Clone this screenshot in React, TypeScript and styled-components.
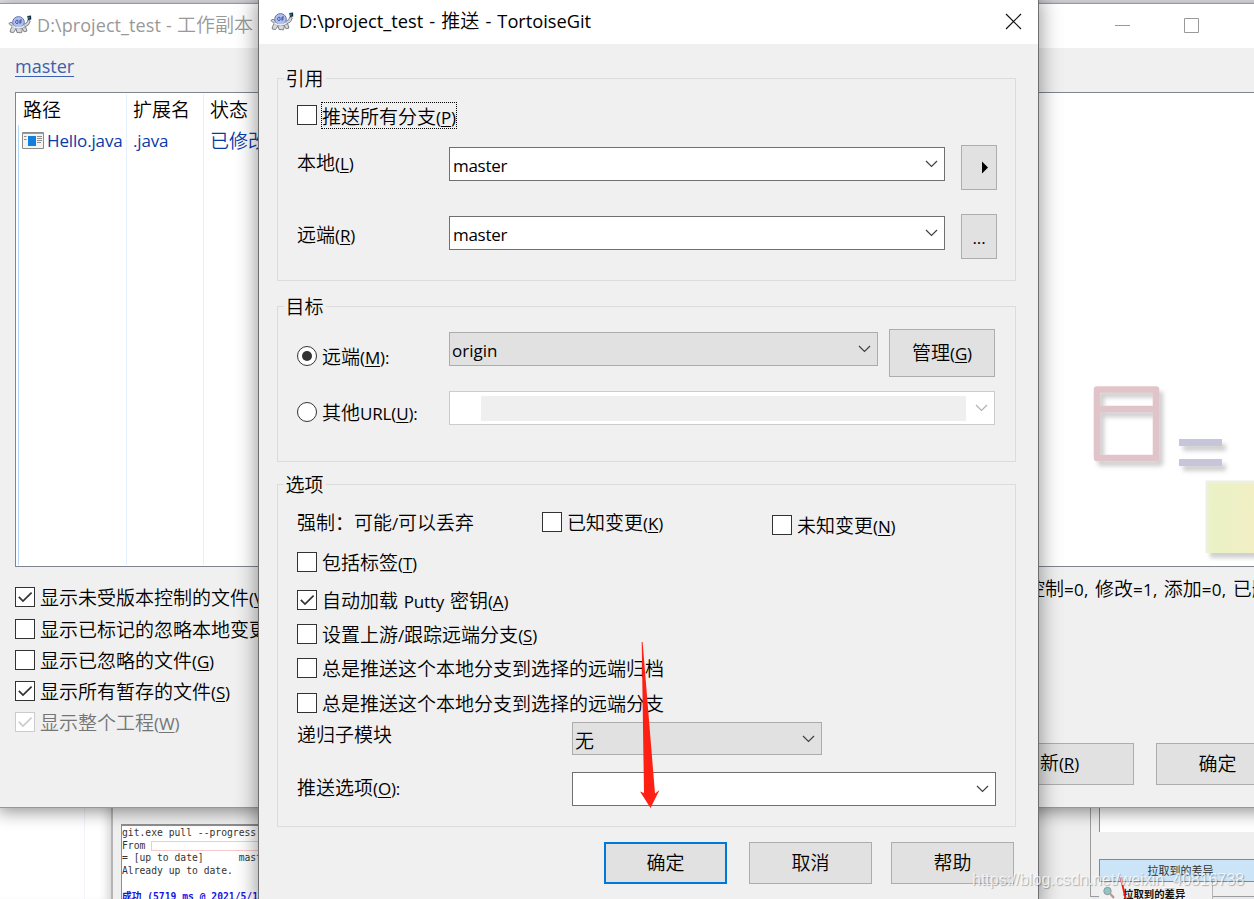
import React from "react";
import styled, { createGlobalStyle, css } from "styled-components";

const Global = createGlobalStyle`
  * { box-sizing: border-box; }
  html, body { margin: 0; padding: 0; }
  body {
    width: 1254px; height: 899px; overflow: hidden;
    font-family: "Noto Sans CJK SC", "Open Sans", sans-serif;
    font-weight: 350;
    font-size: 19px; line-height: 28px; color: #000;
  }
`;

const Desktop = styled.div`
  position: relative;
  width: 1254px;
  height: 899px;
  overflow: hidden;
  background: #e7e8ec;
`;

/* ---------- text ---------- */

const Line = styled.span<{ $color?: string }>`
  display: inline-block;
  white-space: pre;
  color: ${(p) => p.$color ?? "inherit"};
`;
const Latin = styled.span`
  font-family: "Open Sans", sans-serif;
  font-weight: 400;
  font-size: 17px;
  letter-spacing: -0.15px;
  word-spacing: 1.4px;
`;
const Key = styled.span`
  text-decoration: underline;
  text-decoration-thickness: 1px;
  text-underline-offset: 2px;
`;

/* "&X" marks X as the keyboard mnemonic */
function Text({ children, color }: { children: string; color?: string }) {
  const runs = children.match(/[\x20-\x7e]+|[^\x20-\x7e]+/g) ?? [];
  return (
    <Line $color={color}>
      {runs.map((run, i) => {
        if (!/[\x20-\x7e]/.test(run)) return <span key={i}>{run}</span>;
        const at = run.indexOf("&");
        if (at < 0) return <Latin key={i}>{run}</Latin>;
        return (
          <Latin key={i}>
            {run.slice(0, at)}
            <Key>{run[at + 1]}</Key>
            {run.slice(at + 2)}
          </Latin>
        );
      })}
    </Line>
  );
}

/* ---------- controls ---------- */

const Check = styled.span<{ $off?: boolean }>`
  flex: none;
  display: block;
  width: 20px;
  height: 20px;
  border: 1px solid ${(p) => (p.$off ? "#ccc" : "#333")};
  background: #fff;
  color: ${(p) => (p.$off ? "#ccc" : "#333")};
  svg { display: block; }
`;
const Option = styled.div<{ $mt?: number }>`
  display: flex;
  align-items: flex-start;
  height: 20px;
  margin-top: ${(p) => p.$mt ?? 0}px;
  gap: 5px;
  ${Line} { margin-top: -4px; }
`;
const Radio = styled.span<{ $on?: boolean }>`
  flex: none;
  display: flex;
  align-items: center;
  justify-content: center;
  width: 20px;
  height: 20px;
  border: 1px solid #333;
  border-radius: 50%;
  background: #fff;
  &::after {
    content: "";
    width: 10px;
    height: 10px;
    border-radius: 50%;
    background: ${(p) => (p.$on ? "#333" : "transparent")};
  }
`;
const Focus = styled.span`
  height: 27px;
  margin: -3px 0 0 -1px;
  padding: 0 1px;
  outline: 1px dotted #000;
  outline-offset: -1px;
  ${Line} { margin-top: -1px; }
`;

function CheckBox({ on, off }: { on?: boolean; off?: boolean }) {
  return (
    <Check $off={off}>
      {on && (
        <svg width="18" height="18" viewBox="0 0 18 18" fill="none" stroke="currentColor" strokeWidth="1.7">
          <path d="M2.8 8.8 7 13 15.6 4.6" />
        </svg>
      )}
    </Check>
  );
}

const Combo = styled.div<{ $w: number; $h?: number; $mt?: number; $kind?: "list" | "off" }>`
  flex: none;
  display: flex;
  align-items: center;
  justify-content: space-between;
  width: ${(p) => p.$w}px;
  height: ${(p) => p.$h ?? 34}px;
  margin-top: ${(p) => p.$mt ?? 0}px;
  padding: 2px 6px 0 3px;
  border: 1px solid #707070;
  background: #fff;
  ${Latin} { letter-spacing: -0.3px; }
  ${(p) => p.$kind === "list" && css`border-color: #acacac; background: #e1e1e1; padding-left: 2px; ${Latin} { letter-spacing: 0; }`}
  ${(p) => p.$kind === "off" && css`border-color: #ccc; padding-left: 31px;`}
  > svg { margin-top: -2px; margin-left: auto; }
`;
const Redacted = styled.div`
  width: 485px;
  height: 25px;
  margin-top: -2px;
  background: #efefef;
`;
const Chevron = ({ color = "#404040" }: { color?: string }) => (
  <svg width="13" height="8" viewBox="0 0 13 8" fill="none" stroke={color} strokeWidth="1.2">
    <path d="M1 1 6.5 6.5 12 1" />
  </svg>
);
const Button = styled.div<{ $w: number; $h?: number; $primary?: boolean }>`
  flex: none;
  display: flex;
  align-items: center;
  justify-content: center;
  width: ${(p) => p.$w}px;
  height: ${(p) => p.$h ?? 42}px;
  padding: 0 0 ${(p) => (p.$h ? 0 : 2)}px;
  border: ${(p) => (p.$primary ? "2px solid #0078d7" : "1px solid #adadad")};
  background: #e1e1e1;
`;

/* ---------- push dialog ---------- */

const Dialog = styled.section`
  position: absolute;
  left: 258px;
  top: -2px;
  width: 781px;
  height: 910px;
  border: 1px solid #6e6e70;
  background: #f0f0f0;
  box-shadow: 0 0 20px 1px rgba(0, 0, 0, 0.42);
`;
const TitleBar = styled.header<{ $h: number }>`
  display: flex;
  align-items: center;
  height: ${(p) => p.$h}px;
  background: #fff;
`;
const DialogTitle = styled(TitleBar)`
  padding: 0 16px 0 11px;
  gap: 5px;
  ${Line} { padding-bottom: 2px; }
  ${Latin} { font-size: 18.3px; letter-spacing: -0.03px; }
  > svg:last-child { margin-left: auto; }
`;
const Group = styled.div<{ $mt: number; $h: number }>`
  height: ${(p) => p.$h}px;
  width: 739px;
  margin: ${(p) => p.$mt}px 0 0 18px;
  padding-left: 19px;
  border: 1px solid #dcdcdc;
`;
const Legend = styled.div`
  width: 42px;
  height: 29px;
  margin: -15px 0 0 -13px;
  padding-left: 1.5px;
  background: #f0f0f0;
`;
const Row = styled.div<{ $mt: number; $h: number }>`
  display: flex;
  align-items: flex-start;
  height: ${(p) => p.$h}px;
  margin-top: ${(p) => p.$mt}px;
`;
const Cell = styled.div<{ $w: number; $pt?: number; $up?: number }>`
  flex: none;
  width: ${(p) => p.$w}px;
  padding-top: ${(p) => p.$pt ?? 0}px;
  margin-top: ${(p) => -(p.$up ?? 0)}px;
`;
const Gap = styled.div<{ $w: number }>`
  flex: none;
  width: ${(p) => p.$w}px;
`;
const Footer = styled.footer`
  display: flex;
  margin: 15px 0 0 345px;
`;

const Turtle = () => (
  <svg width="24" height="20" viewBox="0 0 24 20">
    <g fill="#d6d8dc" stroke="#73767c" strokeWidth="0.9">
      <path d="M.8 8.500 3 7.200 6 9.500 4.500 11.500z" />
      <path d="M4.500 11 2.500 14.500 2.200 17 5.500 17.600 8 14z" />
      <path d="M8 13.500 9 17.500 13.500 17.800 14.500 13.500z" />
      <path d="M14 13 16 16.800 19 16 17.500 11.500z" />
      <path d="M15.500 9.500 19 7.500 19.800 4.800 22.300 6 20.500 9.800 16.500 12z" />
    </g>
    <ellipse cx="10.500" cy="7.200" rx="5.800" ry="5.600" fill="#aebff0" stroke="#6678b4" strokeWidth="1" />
    <path d="M4.500 10.800c3 2.800 9.500 2.800 12 0" fill="none" stroke="#e9ebf0" strokeWidth="1.600" />
    <path d="M9.600 5.200c-2.200-.6-3 3.200-.6 3.400 1.500 0 1.300-2.400.6-3.400M12 5v3.800M12 5h2M12 7h1.800" fill="none" stroke="#3a4f94" strokeWidth="1" />
    <path d="M19.200 1 23 .6 23.300 4.500 20 5z" fill="#172838" />
    <path d="M20 1.800h1.800v1.700h-1.800z" fill="#1f7fa6" />
  </svg>
);

function PushDialog() {
  return (
    <Dialog>
      <DialogTitle $h={45}>
        <Turtle />
        <Text>{"D:\\project_test - 推送 - TortoiseGit"}</Text>
        <svg width="17" height="17" viewBox="0 0 17 17" stroke="#111" strokeWidth="1.2">
          <path d="M1 1 16 16M16 1 1 16" />
        </svg>
      </DialogTitle>

      <Group $mt={34} $h={203}>
        <Legend><Text>引用</Text></Legend>
        <Option $mt={12}>
          <CheckBox />
          <Focus><Text>推送所有分支(&P)</Text></Focus>
        </Option>
        <Row $mt={20} $h={45}>
          <Cell $w={152} $pt={3}><Text>本地(&L)</Text></Cell>
          <Combo $w={496} $mt={2}><Text>master</Text><Chevron /></Combo>
          <Gap $w={16} />
          <Button $w={36} $h={45}>
            <svg width="26" height="13" viewBox="0 0 26 13"><path d="M16 .5v12l6-6z" /></svg>
          </Button>
        </Row>
        <Row $mt={24} $h={45}>
          <Cell $w={152} $pt={6}><Text>远端(&R)</Text></Cell>
          <Combo $w={496} $mt={2}><Text>master</Text><Chevron /></Combo>
          <Gap $w={16} />
          <Button $w={36} $h={45}><Text>...</Text></Button>
        </Row>
      </Group>

      <Group $mt={25} $h={156}>
        <Legend><Text>目标</Text></Legend>
        <Row $mt={8} $h={48}>
          <Cell $w={152} $pt={17}>
            <Option><Radio $on /><Text>远端(&M):</Text></Option>
          </Cell>
          <Combo $w={429} $mt={3} $kind="list"><Text>origin</Text><Chevron /></Combo>
          <Gap $w={11} />
          <Button $w={106} $h={48}><Text>管理(&G)</Text></Button>
        </Row>
        <Row $mt={14} $h={34}>
          <Cell $w={152} $pt={11}>
            <Option><Radio /><Text>其他URL(&U):</Text></Option>
          </Cell>
          <Combo $w={546} $kind="off"><Redacted /><Chevron color="#b0b0b0" /></Combo>
        </Row>
      </Group>

      <Group $mt={22} $h={343}>
        <Legend><Text>选项</Text></Legend>
        <Row $mt={13} $h={23}>
          <Cell $w={245}><Option><Text>强制：可能/可以丢弃</Text></Option></Cell>
          <Cell $w={230}><Option><CheckBox /><Text>已知变更(&K)</Text></Option></Cell>
          <Option $mt={3}><CheckBox /><Text>未知变更(&N)</Text></Option>
        </Row>
        <Option $mt={17}><CheckBox /><Text>包括标签(&T)</Text></Option>
        <Option $mt={18}><CheckBox on /><Text>自动加载 Putty 密钥(&A)</Text></Option>
        <Option $mt={14}><CheckBox /><Text>设置上游/跟踪远端分支(&S)</Text></Option>
        <Option $mt={14}><CheckBox /><Text>总是推送这个本地分支到选择的远端归档</Text></Option>
        <Option $mt={15}><CheckBox /><Text>总是推送这个本地分支到选择的远端分支</Text></Option>
        <Row $mt={9} $h={33}>
          <Cell $w={275} $up={2}><Text>递归子模块</Text></Cell>
          <Combo $w={250} $h={33} $kind="list"><Text>无</Text><Chevron /></Combo>
        </Row>
        <Row $mt={17} $h={34}>
          <Cell $w={275} $pt={1}><Text>推送选项(&O):</Text></Cell>
          <Combo $w={424}><Chevron /></Combo>
        </Row>
      </Group>

      <Footer>
        <Button $w={123} $primary><Text>确定</Text></Button>
        <Gap $w={22} />
        <Button $w={123}><Text>取消</Text></Button>
        <Gap $w={19} />
        <Button $w={123}><Text>帮助</Text></Button>
      </Footer>
    </Dialog>
  );
}

/* ---------- commit window behind ---------- */

const BackWindow = styled.section`
  position: absolute;
  left: -1px;
  top: 3px;
  width: 1400px;
  height: 805px;
  border: 1px solid #96989c;
  background: #f0f0f0;
  box-shadow: 0 3px 16px 1px rgba(0, 0, 0, 0.42);
`;
const BackTitle = styled(TitleBar)`
  justify-content: space-between;
  width: 1199px;
  padding: 0 0 2px 8px;
  background: transparent;
  ${Line} { padding-bottom: 1px; }
  ${Latin} { font-size: 18px; letter-spacing: 0.08px; word-spacing: 0.4px; }
`;
const TitleStrip = styled.div`
  background: #fff;
`;
const TitleLabel = styled.div`
  display: flex;
  align-items: center;
  gap: 5px;
`;
const BranchLink = styled.div`
  height: 44px;
  padding: 3px 0 0 15px;
  color: #3c5fae;
  ${Latin} { font-size: 18px; letter-spacing: 0; text-decoration: underline; text-underline-offset: 3px; text-decoration-thickness: 1px; }
`;
const FileList = styled.div`
  display: flex;
  width: 1300px;
  height: 475px;
  margin-left: 15px;
  padding: 1px 0 1px 2px;
  border: 1px solid #7f848e;
  background: #fff;
`;
const Column = styled.div<{ $w: number }>`
  flex: none;
  width: ${(p) => p.$w}px;
  border-right: 1px solid #e3effb;
  white-space: nowrap;
  overflow: hidden;
`;
const Head = styled.div<{ $first?: boolean }>`
  height: 31px;
  padding: 1px 0 0 ${(p) => (p.$first ? 5 : 6)}px;
`;
const FileCell = styled.div<{ $first?: boolean }>`
  display: flex;
  align-items: center;
  gap: 3px;
  height: 30px;
  padding-left: ${(p) => (p.$first ? 3 : 6)}px;
  color: #0a3aa8;
`;
const FirstBody = styled.div`
  height: 441px;
  border-left: 1px solid #b5d7f8;
`;
const Artwork = styled.div`
  padding: 226px 0 0 885px;
`;
const Lower = styled.div`
  display: flex;
  height: 240px;
`;
const Options = styled.div`
  width: 1011px;
  padding: 20px 0 0 15px;
`;
const RightFooter = styled.div`
  width: 380px;
`;
const Status = styled.div`
  height: 28px;
  margin: 7px 0 0 15px;
  ${Latin} { letter-spacing: 0.3px; }
`;
const BackButtons = styled.div`
  display: flex;
  gap: 22px;
  margin: 141px 0 0 -45px;
`;

const ArtImage = () => (
  <svg width="180" height="180" viewBox="1089 381 180 180">
    <defs>
      <filter id="soft" x="-20%" y="-20%" width="150%" height="150%">
        <feDropShadow dx="4" dy="5" stdDeviation="2" floodColor="#777" floodOpacity="0.35" />
      </filter>
      <linearGradient id="note"><stop offset="0" stopColor="#e9f2c6" /><stop offset="1" stopColor="#f4eec4" /></linearGradient>
    </defs>
    <g filter="url(#soft)">
      <path d="M1097 389.500h59v68.500h-59zM1097 409h59" fill="none" stroke="#e0c4c9" strokeWidth="6.500" strokeLinejoin="round" />
      <path d="M1179 439h43v7h-43zM1179 459h43v7h-43z" fill="#c6c5da" />
      <path d="M1206 481h60v72h-60z" fill="url(#note)" />
    </g>
    <path d="M1207 553V482H1260" fill="none" stroke="#edf0df" strokeWidth="3" />
  </svg>
);

function CommitWindow() {
  return (
    <BackWindow>
      <TitleStrip>
        <BackTitle $h={44}>
          <TitleLabel>
            <Turtle />
            <Text color="#999">{"D:\\project_test - 工作副本"}</Text>
          </TitleLabel>
          <svg width="84" height="18" viewBox="0 0 84 18" fill="none" stroke="#999">
            <path d="M0 9.500H15M69.500 2.500h14v14h-14z" />
          </svg>
        </BackTitle>
      </TitleStrip>
      <BranchLink><Text>master</Text></BranchLink>
      <FileList>
        <Column $w={109}>
          <Head $first><Text>路径</Text></Head>
          <FirstBody>
            <FileCell $first>
              <svg width="22" height="17" viewBox="0 0 22 17">
                <path d="M.5.5h21v16H.5z" fill="#f3f3f3" stroke="#8b8b8b" />
                <path d="M1 1h20v1H1z" fill="#9b9b9b" />
                <path d="M6 4h8v10H6z" fill="#1180dc" />
                <path d="M2 4.500h2.500M2 7.500h2.500M15 4.500h5M15 6.500h5M15 8.500h5M15 10.500h4" stroke="#8d8d8d" />
              </svg>
              <Text>Hello.java</Text>
            </FileCell>
          </FirstBody>
        </Column>
        <Column $w={77}>
          <Head><Text>扩展名</Text></Head>
          <FileCell><Text>.java</Text></FileCell>
        </Column>
        <Column $w={1100}>
          <Row $mt={0} $h={61}>
            <Cell $w={80}>
              <Head><Text>状态</Text></Head>
              <FileCell><Text>已修改</Text></FileCell>
            </Cell>
          </Row>
          <Artwork><ArtImage /></Artwork>
        </Column>
      </FileList>
      <Lower>
        <Options>
          <Option><CheckBox on /><Text>显示未受版本控制的文件(&V)</Text></Option>
          <Option $mt={12}><CheckBox /><Text>显示已标记的忽略本地变更</Text></Option>
          <Option $mt={11}><CheckBox /><Text>显示已忽略的文件(&G)</Text></Option>
          <Option $mt={11}><CheckBox on /><Text>显示所有暂存的文件(&S)</Text></Option>
          <Option $mt={11}><CheckBox on off /><Text color="#757575">显示整个工程(&W)</Text></Option>
        </Options>
        <RightFooter>
          <Status><Text>控制=0, 修改=1, 添加=0, 已删除=0</Text></Status>
          <BackButtons>
            <Button $w={168}><Text>刷新(&R)</Text></Button>
            <Button $w={123}><Text>确定</Text></Button>
          </BackButtons>
        </RightFooter>
      </Lower>
    </BackWindow>
  );
}

/* ---------- windows at the bottom of the desktop ---------- */

const Explorer = styled.section`
  position: absolute;
  left: 0;
  top: 800px;
  width: 111px;
  height: 99px;
  background: #fff;
  box-shadow: inset -9px 0 10px -6px rgba(0, 0, 0, 0.18);
  display: flex;
  &::before { content: ""; width: 84px; border-right: 1px solid #f0f3fa; }
`;
const PullWindow = styled.section`
  position: absolute;
  left: 111px;
  top: 780px;
  width: 980px;
  height: 140px;
  border-left: 2px solid #b4b4b4;
  background: #efefef;
  padding: 44px 0 0 8px;
`;
const Console = styled.div`
  height: 90px;
  width: 700px;
  border: 1px solid #8e8e8e;
  border-width: 2px 1px 1px 1px;
  background: #fff;
  font: 9.7px/12.7px "DejaVu Sans Mono", "Noto Sans CJK SC", monospace;
  color: #333;
  white-space: pre;
  padding: 1px 0 0 0;
`;
const ConsoleLine = styled.div<{ $done?: boolean }>`
  display: flex;
  height: 12.7px;
  ${(p) => p.$done && css`color: #1414e6; font-weight: 700; padding-top: 1px;`}
`;
const Erased = styled.span`
  width: 200px;
  height: 10px;
  margin-top: 1px;
  border: 1px solid #f6caca;
`;
const DiffWindow = styled.section`
  position: absolute;
  left: 1090px;
  top: 780px;
  width: 200px;
  height: 117px;
  border: 1px solid #9c9c9c;
  background: #efefef;
  padding-left: 8px;
`;
const LogBox = styled.div`
  height: 51px;
  border-left: 1px solid #8c8c8c;
  background: #fff;
`;
const DiffButton = styled.div`
  height: 23px;
  margin-top: 27px;
  padding-left: 47.5px;
  border: 1px solid #5d93c4;
  background: #cce4f7;
  font-size: 11px;
  font-weight: 400;
  line-height: 21px;
  color: #333;
`;
const DiffMenu = styled.div`
  position: absolute;
  left: 1099px;
  top: 882px;
  width: 114px;
  height: 24px;
  display: flex;
  gap: 7px;
  padding: 4px 0 0 3px;
  background: #f1f1f1;
  border-right: 1px solid #b5b5b5;
  font-size: 10.4px;
  font-weight: 700;
  line-height: 15px;
  color: #111;
`;
const Overlay = styled.svg`
  position: absolute;
  left: 0;
  top: 0;
`;
const Watermark = styled.div`
  position: absolute;
  left: 972px;
  top: 870px;
  font: 16px/20px "Liberation Sans", sans-serif;
  color: rgba(255, 255, 255, 0.75);
  text-shadow: 1px 1px 1px rgba(0, 0, 0, 0.28);
`;

export default function App() {
  return (
    <Desktop>
      <Global />
      <PullWindow>
        <Console>
          <ConsoleLine>git.exe pull --progress -v</ConsoleLine>
          <ConsoleLine>{"From "}<Erased /></ConsoleLine>
          <ConsoleLine>{"= [up to date]      master"}</ConsoleLine>
          <ConsoleLine>Already up to date.</ConsoleLine>
          <ConsoleLine />
          <ConsoleLine $done>{"成功 (5719 ms @ 2021/5/1"}</ConsoleLine>
        </Console>
      </PullWindow>
      <Explorer />
      <DiffWindow>
        <LogBox />
        <DiffButton>拉取到的差异</DiffButton>
      </DiffWindow>
      <DiffMenu>
        <svg width="14" height="14" viewBox="0 0 14 14">
          <path d="m8.500 8 3.500 4" stroke="#c98d86" strokeWidth="2" />
          <circle cx="5.500" cy="5" r="3.700" fill="#8fc6c4" stroke="#8a9a9c" />
        </svg>
        拉取到的差异
      </DiffMenu>
      <CommitWindow />
      <PushDialog />
      <Overlay width="1254" height="899" viewBox="0 0 1254 899">
        <path d="M641.700 642h.9L655 793.500 659.500 790 650.500 808 640 791.500 644 793z" fill="#ff2014" />
        <path d="M1120.500 877 1126 900" stroke="#f01818" strokeWidth="1.800" />
      </Overlay>
      <Watermark>https://blog.csdn.net/weixin_40816738</Watermark>
    </Desktop>
  );
}
